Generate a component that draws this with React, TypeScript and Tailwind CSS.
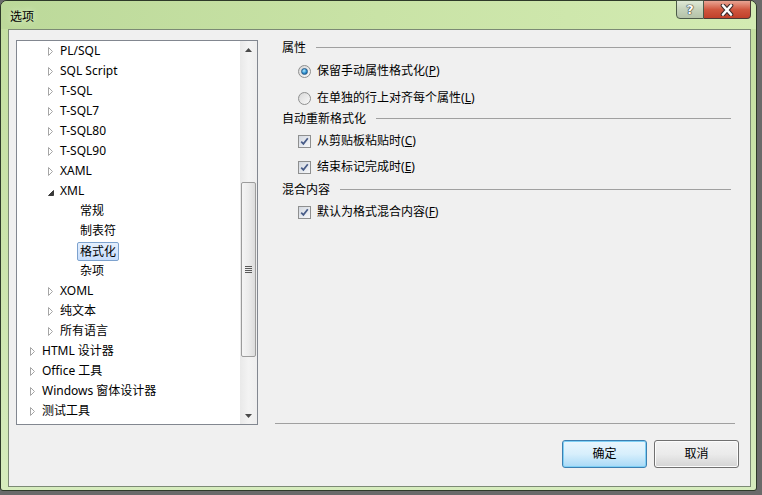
import React from "react";

type Row = { level: 1 | 2 | 3; text: string; arrow?: "c" | "e"; sel?: boolean };

const rows: Row[] = [
  { level: 2, text: "PL/SQL", arrow: "c" },
  { level: 2, text: "SQL Script", arrow: "c" },
  { level: 2, text: "T-SQL", arrow: "c" },
  { level: 2, text: "T-SQL7", arrow: "c" },
  { level: 2, text: "T-SQL80", arrow: "c" },
  { level: 2, text: "T-SQL90", arrow: "c" },
  { level: 2, text: "XAML", arrow: "c" },
  { level: 2, text: "XML", arrow: "e" },
  { level: 3, text: "常规" },
  { level: 3, text: "制表符" },
  { level: 3, text: "格式化", sel: true },
  { level: 3, text: "杂项" },
  { level: 2, text: "XOML", arrow: "c" },
  { level: 2, text: "纯文本", arrow: "c" },
  { level: 2, text: "所有语言", arrow: "c" },
  { level: 1, text: "HTML 设计器", arrow: "c" },
  { level: 1, text: "Office 工具", arrow: "c" },
  { level: 1, text: "Windows 窗体设计器", arrow: "c" },
  { level: 1, text: "测试工具", arrow: "c" },
];

const padByLevel: Record<number, string> = {
  1: "pl-[13px]",
  2: "pl-[31px]",
  3: "pl-[60px]",
};

function Collapsed() {
  return (
    <svg width="6" height="9" viewBox="0 0 6 9" className="block">
      <path d="M0.5 0.5 L4.5 4.5 L0.5 8.5 Z" fill="#fff" stroke="#a6a6a6" strokeWidth="1" />
    </svg>
  );
}

function Expanded() {
  return (
    <svg width="6" height="6" viewBox="0 0 6 6" className="block mt-[3px]">
      <path d="M5.5 0.5 L5.5 5.5 L0.5 5.5 Z" fill="#3a3a3a" stroke="#3a3a3a" strokeWidth="1" />
    </svg>
  );
}

function TreeRow({ r }: { r: Row }) {
  if (r.level === 3) {
    return (
      <div className={`h-[20px] flex items-center ${padByLevel[3]}`}>
        {r.sel ? (
          <span className="h-[19px] mt-[1px] flex items-center px-[2px] border border-[#7da2ce] rounded-[2px] bg-gradient-to-b from-[#e4effd] to-[#c8defc] leading-[17px]">
            {r.text}
          </span>
        ) : (
          <span className="pl-[3px] leading-[20px]">{r.text}</span>
        )}
      </div>
    );
  }
  return (
    <div className={`h-[20px] flex items-center ${padByLevel[r.level]}`}>
      <span className="w-[12px] flex items-center">{r.arrow === "e" ? <Expanded /> : <Collapsed />}</span>
      <span className="leading-[20px] whitespace-nowrap">{r.text}</span>
    </div>
  );
}

function Radio({ checked }: { checked?: boolean }) {
  return (
    <span className="w-[13px] h-[13px] rounded-full border border-[#8e8f8f] bg-gradient-to-br from-[#d6d6d6] to-[#fbfbfb] flex items-center justify-center shrink-0">
      {checked ? (
        <span className="w-[7px] h-[7px] rounded-full border border-[#2a5d8a] bg-[radial-gradient(circle_at_40%_35%,#b6ecff,#2b8fd0_55%,#0d4f86)]" />
      ) : (
        <span className="w-[9px] h-[9px] rounded-full bg-gradient-to-br from-[#dcdcdc] to-[#f6f6f6]" />
      )}
    </span>
  );
}

function Check() {
  return (
    <span className="w-[13px] h-[13px] border border-[#8e8f8f] bg-[#f4f4f4] flex items-center justify-center shrink-0">
      <span className="w-[11px] h-[11px] bg-gradient-to-br from-[#d3d8e0] to-[#f7f8fa] flex items-center justify-center">
        <svg width="9" height="9" viewBox="0 0 9 9">
          <path d="M1.2 4.6 L3.4 6.9 L7.8 1.3" fill="none" stroke="#485c88" strokeWidth="1.7" />
        </svg>
      </span>
    </span>
  );
}

function Heading({ text }: { text: string }) {
  return (
    <div className="h-[16px] flex items-center pl-[7px] pr-[4px]">
      <span className="leading-[16px] whitespace-nowrap">{text}</span>
      <span className="flex-1 ml-[10px] h-px bg-[#a0a0a0] -mt-[1px]" />
    </div>
  );
}

function Option({ kind, checked, label, mn, className }: { kind: "r" | "c"; checked?: boolean; label: string; mn: string; className: string }) {
  return (
    <div className={`h-[20px] flex items-center pl-[23px] ${className}`}>
      {kind === "r" ? <Radio checked={checked} /> : <Check />}
      <span className="ml-[6px] leading-[20px] whitespace-nowrap">
        {label}(<span className="underline">{mn}</span>)
      </span>
    </div>
  );
}

export default function App() {
  return (
    <div className="w-[762px] h-[495px] bg-[#6a6a6a] overflow-hidden font-['Noto_Sans','Noto_Sans_CJK_SC',sans-serif] text-[12px] text-black">
      <div className="w-[757px] h-[491px] rounded-t-[7px] rounded-b-[3px] border border-[#2e3a29] bg-gradient-to-b from-[#c4dfa0] via-[#cbe4ab] to-[#d6ecbd] flex flex-col">
        {/* title bar */}
        <div className="h-[28px] flex items-start pl-[9px] pr-[5px] bg-gradient-to-r from-[#bcd99a] via-[#c9e3a6] to-[#d3ebb2] rounded-t-[6px]">
          <span className="pt-[2px] leading-[28px] text-[12px] [text-shadow:0_0_6px_#e8f5d8]">选项</span>
          <div className="ml-auto flex -mt-[1px]">
            <div className="w-[28px] h-[19px] border border-[#4c5a48] rounded-bl-[4px] bg-gradient-to-b from-[#dfe9d6] via-[#c5d2bb] to-[#b4c2a8] flex items-center justify-center">
              <span className="text-white font-bold text-[13px] leading-[13px] font-['DejaVu_Sans',sans-serif] [text-shadow:0_0_1px_#222,0_0_1px_#222,0_0_1px_#222]">?</span>
            </div>
            <div className="w-[47px] h-[19px] border border-l-0 border-[#4c3a36] rounded-br-[4px] bg-gradient-to-b from-[#e8a493] via-[#d0573f] to-[#c1402a] flex items-center justify-center">
              <svg width="16" height="12" viewBox="0 0 16 12">
                <path d="M4 1.5 L12 10.5 M12 1.5 L4 10.5" stroke="#3b2a2a" strokeWidth="4.6" strokeLinecap="round" />
                <path d="M4 1.5 L12 10.5 M12 1.5 L4 10.5" stroke="#ffffff" strokeWidth="2.6" strokeLinecap="round" />
              </svg>
            </div>
          </div>
        </div>
        {/* client */}
        <div className="ml-[7px] mr-[5px] mb-[3px] flex-1 border border-[#7c8a75] bg-[#f0f0f0] flex flex-col">
          <div className="flex pt-[10px] pl-[7px]">
            {/* tree */}
            <div className="w-[242px] h-[385px] border border-[#828790] bg-white flex">
              <div className="flex-1 pt-0">
                {rows.map((r, i) => (
                  <TreeRow key={i} r={r} />
                ))}
              </div>
              <div className="w-[17px] h-full bg-gradient-to-r from-[#e9e9e9] via-[#f3f3f3] to-[#eeeeee] flex flex-col">
                <div className="h-[17px] flex items-center justify-center">
                  <svg width="7" height="4" viewBox="0 0 7 4">
                    <path d="M0 4 L3.5 0 L7 4 Z" fill="#4a4a4a" />
                  </svg>
                </div>
                <div className="h-[124px]" />
                <div className="mx-[1px] h-[175px] rounded-[2px] border border-[#9c9c9c] bg-gradient-to-r from-[#f5f5f5] via-[#ececec] to-[#dcdcdc] flex items-center justify-center">
                  <div className="flex flex-col gap-[1px]">
                    <span className="w-[7px] h-px bg-[#5a5a5a]" />
                    <span className="w-[7px] h-px bg-[#5a5a5a]" />
                    <span className="w-[7px] h-px bg-[#5a5a5a]" />
                    <span className="w-[7px] h-px bg-[#5a5a5a]" />
                  </div>
                </div>
                <div className="flex-1" />
                <div className="h-[17px] flex items-center justify-center">
                  <svg width="7" height="4" viewBox="0 0 7 4">
                    <path d="M0 0 L3.5 4 L7 0 Z" fill="#4a4a4a" />
                  </svg>
                </div>
              </div>
            </div>
            {/* right panel */}
            <div className="ml-[17px] w-[460px] h-[385px] flex flex-col">
              <Heading text="属性" />
              <Option kind="r" checked label="保留手动属性格式化" mn="P" className="mt-[5px]" />
              <Option kind="r" label="在单独的行上对齐每个属性" mn="L" className="mt-[7px]" />
              <div className="mt-[3px]">
                <Heading text="自动重新格式化" />
              </div>
              <Option kind="c" label="从剪贴板粘贴时" mn="C" className="mt-[4px]" />
              <Option kind="c" label="结束标记完成时" mn="E" className="mt-[6px]" />
              <div className="mt-[5px]">
                <Heading text="混合内容" />
              </div>
              <Option kind="c" label="默认为格式混合内容" mn="F" className="mt-[4px]" />
              <div className="mt-auto h-px bg-[#a0a0a0]" />
              <div className="h-[1px]" />
            </div>
          </div>
          <div className="flex justify-end gap-[7px] pr-[11px] mt-[15px]">
            <button className="w-[85px] h-[28px] rounded-[3px] border border-[#3c7fb1] bg-gradient-to-b from-[#eaf6fd] via-[#d7effc] to-[#a8d9f6] shadow-[inset_0_0_0_1px_#7fd0f5] text-[12px] leading-[26px]">
              确定
            </button>
            <button className="w-[85px] h-[28px] rounded-[3px] border border-[#707070] bg-gradient-to-b from-[#f2f2f2] via-[#ebebeb] to-[#d4d4d4] shadow-[inset_0_0_0_1px_#fcfcfc] text-[12px] leading-[26px]">
              取消
            </button>
          </div>
        </div>
      </div>
    </div>
  );
}
